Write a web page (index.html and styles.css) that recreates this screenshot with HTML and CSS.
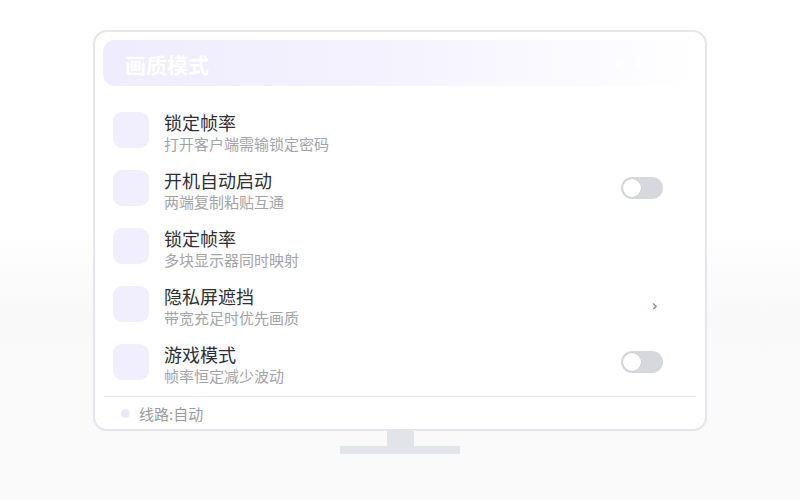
FILE: index.html
```html
<!DOCTYPE html>
<html lang="zh-CN">
<head>
<meta charset="utf-8">
<link rel="stylesheet" href="styles.css">
</head>
<body>
<div class="stage">
  <div class="monitor">
    <div class="screen">
      <div class="header">
        <span class="header-title">画质模式</span>
        <span class="dots"><i></i><i></i><i></i></span>
      </div>
      <ul class="list">
        <li class="row">
          <span class="icon"></span>
          <div class="text"><div class="title">锁定帧率</div><div class="sub">打开客户端需输锁定密码</div></div>
        </li>
        <li class="row">
          <span class="icon"></span>
          <div class="text"><div class="title">开机自动启动</div><div class="sub">两端复制粘贴互通</div></div>
          <span class="toggle"><span class="knob"></span></span>
        </li>
        <li class="row">
          <span class="icon"></span>
          <div class="text"><div class="title">锁定帧率</div><div class="sub">多块显示器同时映射</div></div>
        </li>
        <li class="row">
          <span class="icon"></span>
          <div class="text"><div class="title">隐私屏遮挡</div><div class="sub">带宽充足时优先画质</div></div>
          <span class="chevron">›</span>
        </li>
        <li class="row">
          <span class="icon"></span>
          <div class="text"><div class="title">游戏模式</div><div class="sub">帧率恒定减少波动</div></div>
          <span class="toggle"><span class="knob"></span></span>
        </li>
      </ul>
      <div class="divider"></div>
      <div class="footer">
        <span class="footer-dot"></span>
        <span class="footer-text">线路:自动</span>
      </div>
    </div>
    <div class="neck"></div>
    <div class="base"></div>
  </div>
</div>
</body>
</html>
```

FILE: styles.css
```css
* { box-sizing: border-box; }
html, body { margin: 0; padding: 0; }
body {
  width: 800px;
  height: 500px;
  overflow: hidden;
  font-family: "Noto Sans CJK SC", "Noto Sans", sans-serif;
  background: linear-gradient(to bottom, #ffffff 0%, #ffffff 46%, #f9f9fa 62%, #fafafa 100%);
}
.stage {
  display: flex;
  justify-content: center;
  padding-top: 30px;
}
.monitor {
  display: flex;
  flex-direction: column;
  align-items: center;
}
.screen {
  width: 614px;
  height: 401px;
  border: 2px solid #e3e5e9;
  border-radius: 14px;
  background: #ffffff;
  padding: 8px;
  display: flex;
  flex-direction: column;
}
.header {
  height: 46px;
  border-radius: 12px;
  background: linear-gradient(to right, #efecfd 0%, #f4f2fe 45%, #fbfaff 80%, rgba(255,255,255,0) 100%);
  display: flex;
  align-items: center;
  justify-content: space-between;
  padding: 3px 22px 0 22px;
  flex-shrink: 0;
}
.header-title {
  color: #ffffff;
  font-size: 21px;
  font-weight: 700;
  line-height: 1;
}
.dots { display: flex; gap: 15px; margin-right: 14px; }
.dots i {
  display: block;
  width: 5px;
  height: 5px;
  border-radius: 50%;
  background: #ffffff;
}
.list {
  list-style: none;
  margin: 15px 0 0 0;
  padding: 0;
}
.row {
  height: 58px;
  display: flex;
  align-items: center;
  padding: 0 34px 0 10px;
}
.icon {
  width: 36px;
  height: 36px;
  border-radius: 9px;
  background: #f1eefd;
  flex-shrink: 0;
}
.text {
  flex: 1;
  margin-left: 15px;
  padding-top: 3px;
}
.title {
  font-size: 18px;
  line-height: 24px;
  color: #2e2e33;
}
.sub {
  font-size: 15px;
  line-height: 20px;
  color: #a3a3a8;
}
.toggle {
  width: 42px;
  height: 22px;
  border-radius: 11px;
  background: #d6d8dd;
  padding: 2px;
  display: flex;
  align-items: center;
}
.knob {
  width: 18px;
  height: 18px;
  border-radius: 50%;
  background: #ffffff;
  box-shadow: 0 0 0 0.5px #c8cad0;
}
.chevron {
  font-family: "DejaVu Sans", sans-serif;
  color: #7d8088;
  font-size: 16px;
  line-height: 1;
  margin: 3px 5px 0 0;
}
.divider {
  height: 1px;
  background: #e9e9ec;
  margin: 5px 1px 0 1px;
  flex-shrink: 0;
}
.footer {
  flex: 1;
  display: flex;
  align-items: center;
  padding-left: 18px;
  padding-top: 6px;
}
.footer-dot {
  width: 9px;
  height: 9px;
  border-radius: 50%;
  background: #ebe8fb;
}
.footer-text {
  margin-left: 9px;
  font-size: 15px;
  color: #9a9aa0;
}
.neck {
  width: 27px;
  height: 15px;
  background: #e1e4e9;
}
.base {
  width: 120px;
  height: 8px;
  background: #e1e4e9;
}
```
